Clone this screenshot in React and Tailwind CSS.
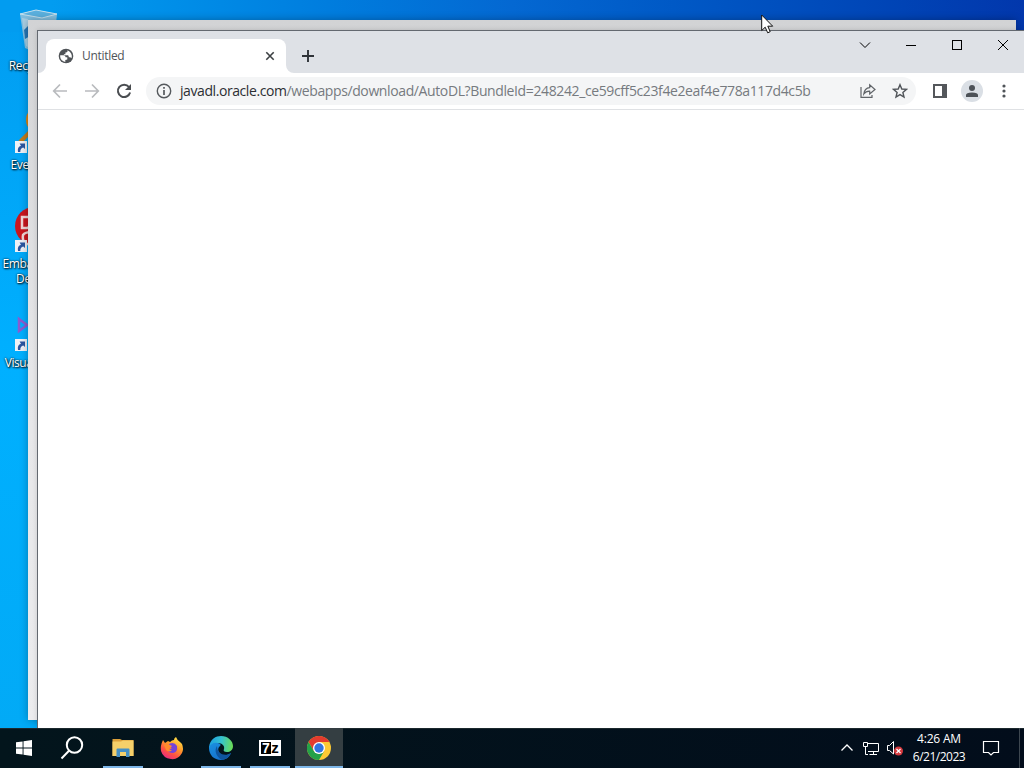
import React from 'react';

const desktopIcons = [
  { id: 'bin', lines: ['Recycle Bin'] },
  { id: 'everything', lines: ['Everything'] },
  { id: 'embarcadero', lines: ['Embarcadero', 'Dev-C++'] },
  { id: 'vs', lines: ['Visual Studio'] },
];

function ShortcutArrow() {
  return (
    <svg className="absolute left-0 bottom-[2px]" width="12" height="12" viewBox="0 0 12 12">
      <rect width="12" height="12" fill="#eef1f6" />
      <path d="M3 11C2.3 7.600 3.600 5.200 6 4.700L4.600 2.500H10V8L8.300 6.400C6.300 6.700 5.200 8.300 5.300 11Z" fill="#2a55a0" />
    </svg>
  );
}

function DesktopGlyph({ id }) {
  if (id === 'bin') {
    return (
      <svg className="mt-[2px] ml-1" width="40" height="46" viewBox="0 0 40 46">
        <path d="M1 6L17 2L38 6L34 43L20 46L6 40Z" fill="#a3c8dc" opacity=".8" />
        <path d="M1 6L17 2L38 6L23 10Z" fill="#5bb0de" stroke="#c4e0ee" strokeWidth="1" />
        <path d="M3 10L7 38L11 40L9 11Z" fill="#cfdfe8" opacity=".5" />
        <path d="M5 22L9 18L11 28L6 31Z" fill="#2476b5" />
      </svg>
    );
  }
  if (id === 'everything') {
    return (
      <svg width="40" height="46" viewBox="0 0 40 46">
        <circle cx="25" cy="15" r="12" fill="none" stroke="#e0850f" strokeWidth="4" />
        <path d="M17 25L5 37" stroke="#c07a18" strokeWidth="4" />
      </svg>
    );
  }
  if (id === 'embarcadero') {
    return (
      <svg width="40" height="46" viewBox="0 0 40 46">
        <circle cx="19" cy="22" r="19" fill="#c9161e" />
        <path d="M7 13H13Q16 13 16 18T12 24H7Z M17 40H10Q7 36 8 31Q10 28 17 28" fill="none" stroke="#f0d5d5" strokeWidth="2.500" />
      </svg>
    );
  }
  return (
    <svg width="40" height="46" viewBox="0 0 40 46">
      <path d="M4 16L12 22L4 28Z" fill="none" stroke="#8a5bd0" strokeWidth="2.500" />
      <path d="M12 22L32 7V38Z" fill="#8a5bd0" />
    </svg>
  );
}

function DesktopIcon({ icon }) {
  return (
    <div className="h-[99px] w-[76px] flex flex-col items-center">
      <div className="relative w-[46px] h-[50px]">
        <DesktopGlyph id={icon.id} />
        {icon.id !== 'bin' && <ShortcutArrow />}
      </div>
      <div className="mt-[2px] text-center text-[12px] leading-[15px] tracking-[-0.4px] text-white whitespace-nowrap [text-shadow:1px_1px_2px_#000,0_0_2px_#000]">
        {icon.lines.map((line) => (
          <div key={line}>{line}</div>
        ))}
      </div>
    </div>
  );
}

function Globe() {
  return (
    <svg width="16" height="16" viewBox="0 0 16 16">
      <circle cx="8" cy="8" r="7.300" fill="#4f5357" />
      <path d="M2.200 7.300H5.600Q7.500 7.500 7.600 9.300H9.300V11.500L7.300 12V13.900Q3 13.200 2.200 9Z" fill="#fff" />
      <path d="M9.500 2.200V3.600Q9.300 4.600 7.400 4.600V6.200H5.900V7.300H9.800Q10.800 7.500 10.800 9.300H12.200L13.500 10.300Q15 5 9.500 2.200Z" fill="#fff" />
    </svg>
  );
}

function TabStrip() {
  return (
    <div className="h-[42px] shrink-0 bg-[#dee1e6] flex items-start">
      <div className="mt-2 flex h-[34px]">
        <svg className="self-end" width="8" height="8" viewBox="0 0 8 8">
          <path d="M8 0V8H0A8 8 0 0 0 8 0Z" fill="#fff" />
        </svg>
        <div className="w-[240px] h-full rounded-t-lg bg-white flex items-center pl-3 pr-[11px]">
          <Globe />
          <span className="ml-2 flex-1 text-[12px] tracking-[-0.3px] text-[#505458]">Untitled</span>
          <svg width="10" height="10" viewBox="0 0 10 10">
            <path d="M1.300 1.300L8.700 8.700M8.700 1.300L1.300 8.700" stroke="#3c4043" strokeWidth="1.600" />
          </svg>
        </div>
        <svg className="self-end" width="8" height="8" viewBox="0 0 8 8">
          <path d="M0 0V8H8A8 8 0 0 1 0 0Z" fill="#fff" />
        </svg>
        <svg className="ml-2 mt-[11px]" width="12" height="12" viewBox="0 0 12 12">
          <path d="M6 0V12M0 6H12" stroke="#2f3338" strokeWidth="1.900" />
        </svg>
      </div>
      <div className="ml-auto flex h-7 items-center text-black">
        <svg width="46" height="28" viewBox="0 0 46 28" fill="none" stroke="currentColor">
          <path d="M18 11.500L23 16.500L28 11.500" />
        </svg>
        <svg width="46" height="28" viewBox="0 0 46 28" fill="none" stroke="currentColor">
          <path d="M18 14.500H28" />
        </svg>
        <svg width="46" height="28" viewBox="0 0 46 28" fill="none" stroke="currentColor">
          <rect x="18.500" y="9.500" width="9" height="9" />
        </svg>
        <svg width="44" height="28" viewBox="0 0 44 28" fill="none" stroke="currentColor">
          <path d="M18 9L28 19M28 9L18 19" />
        </svg>
      </div>
    </div>
  );
}

function Toolbar() {
  return (
    <div className="h-[37px] shrink-0 bg-white border-b border-[#dfe1e4] flex items-center">
      <div className="flex items-center gap-4 pl-[14px]">
        <svg width="16" height="16" viewBox="0 0 16 16" fill="none" stroke="#b9bbbe" strokeWidth="1.700">
          <path d="M15 8H2M8 1.500L1.700 8L8 14.500" />
        </svg>
        <svg width="16" height="16" viewBox="0 0 16 16" fill="none" stroke="#b9bbbe" strokeWidth="1.700">
          <path d="M1 8H14M8 1.500L14.300 8L8 14.500" />
        </svg>
        <svg width="16" height="16" viewBox="0 0 16 16">
          <path d="M13 4A6.200 6.200 0 1 0 14.100 9.500" fill="none" stroke="#4a4d51" strokeWidth="2" />
          <path d="M15 1V7H9Z" fill="#4a4d51" />
        </svg>
      </div>
      <div className="ml-[14px] w-[770px] h-7 rounded-full bg-[#f4f5f6] flex items-center pl-[10px] pr-2">
        <svg width="16" height="16" viewBox="0 0 16 16">
          <circle cx="8" cy="8" r="6.700" fill="none" stroke="#55595d" strokeWidth="1.400" />
          <path d="M8 7V12M8 4V5.700" stroke="#55595d" strokeWidth="1.700" />
        </svg>
        <span className="ml-2 flex-1 text-[14px] leading-5 tracking-[-0.385px] whitespace-nowrap text-[#767a7f]">
          <span className="text-[#2c2f33] tracking-[-0.42px]">javadl.oracle.com</span>
          /webapps/download/AutoDL?BundleId=248242_ce59cff5c23f4e2eaf4e778a117d4c5b
        </span>
        <svg width="16" height="16" viewBox="0 0 16 16" fill="none" stroke="#606468" strokeWidth="1.200">
          <path d="M1 4V14.300H12V12" />
          <path d="M3.800 11Q4.500 5 9.700 4.600V1.800L15 6.500L9.700 11V8.200Q6 8 3.800 11Z" />
        </svg>
        <svg className="ml-4" width="16" height="16" viewBox="0 0 16 16">
          <path d="M8 1.700L9.800 6L14.500 6.400L10.900 9.400L12 14L8 11.600L4 14L5.100 9.400L1.500 6.400L6.200 6Z" fill="none" stroke="#505459" strokeWidth="1.400" />
        </svg>
      </div>
      <svg className="ml-[17px]" width="14" height="14" viewBox="0 0 14 14">
        <path d="M0 0H14V14H0ZM2 2V12H9V2Z" fill="#54575b" fillRule="evenodd" />
      </svg>
      <svg className="ml-[14px]" width="22" height="22" viewBox="0 0 22 22">
        <circle cx="11" cy="11" r="11" fill="#dadfe5" />
        <circle cx="11" cy="8" r="3" fill="#4c5157" />
        <path d="M5 17V15Q5 12.500 11 12.500T17 15V17Z" fill="#4c5157" />
      </svg>
      <svg className="ml-[19px]" width="4" height="14" viewBox="0 0 4 14" fill="#505459">
        <circle cx="2" cy="2" r="1.600" />
        <circle cx="2" cy="7" r="1.600" />
        <circle cx="2" cy="12" r="1.600" />
      </svg>
    </div>
  );
}

function FolderIcon() {
  return (
    <svg width="24" height="24" viewBox="0 0 24 24">
      <path d="M1.500 3H9L11 4H22.500V20H1.500Z" fill="#dca03a" />
      <path d="M1.500 5.500H10L12 4.500H22.500V20H1.500Z" fill="#f5d06a" />
      <path d="M5.500 20V13.500Q5.500 12.500 6.500 12.500H17.500Q18.500 12.500 18.500 13.500V21H15V16H9V21H5.500Z" fill="#4690c4" />
    </svg>
  );
}

function FirefoxIcon() {
  return (
    <svg width="24" height="24" viewBox="0 0 24 24">
      <defs>
        <linearGradient id="fox" x1=".8" y1="0" x2=".2" y2="1">
          <stop offset="0" stopColor="#ffe84a" />
          <stop offset=".4" stopColor="#ff9a2a" />
          <stop offset=".7" stopColor="#ff4f45" />
          <stop offset="1" stopColor="#e6258b" />
        </linearGradient>
      </defs>
      <path d="M3 4L5 7L8 5L10 6Q12 4 14 4Q14 2 16 1Q17 4 20 6L22 8Q24 13 22 17Q18 24 11 23Q3 22 1 15Q0 10 3 4Z" fill="url(#fox)" />
      <path d="M9 8Q14 5 17 10Q18 16 13 17Q8 17 7 13Q10 14 12 12Q9 12 9 8Z" fill="#7543d8" />
      <path d="M4 9Q7 7 10 9L12 10Q11 12 9 12Q9 14 12 14Q9 17 6 14Z" fill="#ff8a2c" />
    </svg>
  );
}

function EdgeIcon() {
  return (
    <svg width="26" height="26" viewBox="0 0 26 26">
      <defs>
        <linearGradient id="edgeTop" x1="0" y1=".4" x2="1" y2=".5">
          <stop offset="0" stopColor="#1c9fe2" />
          <stop offset=".5" stopColor="#35c2cf" />
          <stop offset="1" stopColor="#6bdc55" />
        </linearGradient>
        <linearGradient id="edgeBody" x1="0" y1="0" x2=".6" y2="1">
          <stop offset="0" stopColor="#1a90e0" />
          <stop offset="1" stopColor="#1670cc" />
        </linearGradient>
      </defs>
      <path d="M1 12C2 4 8 1 13 1C20 1 25 6 25 11C25 15 22 17 19 17C16 17 15 16 16 14C17 11 14 8 10 8C5 8 2 11 1 15Z" fill="url(#edgeTop)" />
      <path d="M1 13C2 9 6 7 10 8C13 9 13 10 12 11C9 13 10 18 14 20C17 21 20 20 23 18C21 23 17 25 13 25C6 25 1 20 1 13Z" fill="url(#edgeBody)" />
      <path d="M9 11C6 15 8 22 14 25C18 24.500 21 22 23 18C17 22 9 19 9 11Z" fill="#0f559f" />
    </svg>
  );
}

function SevenZipIcon() {
  return (
    <div className="w-[22px] h-4 bg-white flex p-[2px] font-['Liberation_Sans',sans-serif] font-bold leading-3">
      <span className="w-[10px] bg-black text-white text-[14px] text-center">7</span>
      <span className="flex-1 text-black text-[15px] text-center">z</span>
    </div>
  );
}

function ChromeIcon() {
  return (
    <svg width="24" height="24" viewBox="0 0 24 24">
      <circle cx="12" cy="12" r="12" fill="#fcc934" />
      <path d="M1.600 6A12 12 0 0 1 22.400 6H12L6.800 15Z" fill="#e33b2e" />
      <path d="M1.600 6A12 12 0 0 0 12 24L17.200 15L12 18L6.800 15Z" fill="#24a148" />
      <circle cx="12" cy="12" r="6" fill="#fff" />
      <circle cx="12" cy="12" r="4.700" fill="#3274e0" />
    </svg>
  );
}

function TaskButton({ children, running, active }) {
  return (
    <div className={`w-12 mr-px h-10 flex flex-col items-center ${active ? 'bg-[#343e42]' : ''}`}>
      <div className="h-10 shrink-0 flex items-center justify-center">{children}</div>
      {running && <div className={`h-[2px] shrink-0 -mt-[2px] bg-[#7db6e8] ${active ? 'w-full' : 'w-10'}`} />}
    </div>
  );
}

function Taskbar() {
  return (
    <div className="h-10 shrink-0 bg-linear-to-r from-[#03151c] to-[#020d1b] flex items-center text-white shadow-[inset_0_1px_#1b282d]">
      <div className="w-12 flex justify-center">
        <svg width="16" height="16" viewBox="0 0 16 16" fill="#fff">
          <path d="M0 2.300L6.600 1.400V7.500H0ZM7.500 1.200L16 0V7.500H7.500ZM0 8.500H6.600V14.600L0 13.700ZM7.500 8.500H16V16L7.500 14.800Z" />
        </svg>
      </div>
      <div className="w-[51px] flex pl-3">
        <svg width="24" height="24" viewBox="0 0 24 24" fill="none" stroke="#fff" strokeWidth="2">
          <circle cx="14.500" cy="9" r="7.700" />
          <path d="M9 14.800L1.500 22.500" />
        </svg>
      </div>
      <TaskButton running><FolderIcon /></TaskButton>
      <TaskButton><FirefoxIcon /></TaskButton>
      <TaskButton running><EdgeIcon /></TaskButton>
      <TaskButton running><SevenZipIcon /></TaskButton>
      <TaskButton running active><ChromeIcon /></TaskButton>
      <div className="ml-auto flex items-center">
        <svg width="14" height="16" viewBox="0 0 14 16" fill="none" stroke="#fff" strokeWidth="1.300">
          <path d="M1.500 10.500L7 5L12.500 10.500" />
        </svg>
        <svg className="ml-2" width="18" height="16" viewBox="0 0 18 16" fill="none" stroke="#fff">
          <path d="M5 3.500H16.500V11.500H6M11.500 11.500V14.500M7.500 14.500H15" />
          <path d="M1.500 2.500H5.500V6.500H1.500ZM3.500 6.500V14.500H6" />
        </svg>
        <svg className="ml-[6px]" width="18" height="16" viewBox="0 0 18 16">
          <path d="M1.500 5.500H3.500L7.500 1.500V14L3.500 10.500H1.500Z" fill="none" stroke="#fff" />
          <circle cx="12.500" cy="11" r="4.500" fill="#d5393e" />
          <path d="M10.500 9L14.500 13M14.500 9L10.500 13" stroke="#fff" strokeWidth="1.200" />
        </svg>
        <div className="w-[70px] text-center text-[12px] leading-[18px]">
          <div className="tracking-[-0.2px]">4:26 AM</div>
          <div className="tracking-[-0.5px]">6/21/2023</div>
        </div>
        <svg className="ml-2 mr-[19px]" width="18" height="18" viewBox="0 0 18 18" fill="none" stroke="#fff" strokeWidth="1.200">
          <path d="M1.500 2.500H16.500V13.500H11.500L9 16L6.500 13.500H1.500Z" />
        </svg>
        <div className="mr-1 h-10 w-px bg-[#3d4750]" />
      </div>
    </div>
  );
}

export default function App() {
  return (
    <div className="w-[1024px] h-[768px] overflow-hidden flex flex-col font-['Open_Sans','Noto_Sans',sans-serif]">
      <div className="relative flex-1 overflow-hidden bg-linear-to-b from-[#029cf0] via-[#00b0ff] to-[#02aaf6]">
        <div className="absolute inset-x-0 top-0 h-8 bg-linear-to-r from-[#029cf0] from-5% via-[#0468d2] to-[#0237ac]" />
        <div className="absolute left-0 top-[6px] flex flex-col">
          {desktopIcons.map((icon) => (
            <DesktopIcon key={icon.id} icon={icon} />
          ))}
        </div>
        <div className="absolute left-7 top-5 w-[988px] h-[700px] bg-linear-to-b from-[#d2d3d5] via-[#e6e6e8] to-[#ececee] shadow-[0_0_8px_rgba(0,0,0,0.3)]" />
        <div className="absolute left-[37px] top-[30px] w-[987px] h-[698px] bg-white border-l border-t border-[#646970] shadow-[0_0_5px_rgba(0,0,0,0.15)] flex flex-col">
          <TabStrip />
          <Toolbar />
        </div>
        <svg className="absolute left-[761px] top-[14px]" width="13" height="20" viewBox="0 0 13 20">
          <path d="M.7 1V16.500L4.200 13.200L6.700 18.800L9.200 17.700L6.800 12.200H11.700Z" fill="#fff" stroke="#111" />
        </svg>
      </div>
      <Taskbar />
    </div>
  );
}
